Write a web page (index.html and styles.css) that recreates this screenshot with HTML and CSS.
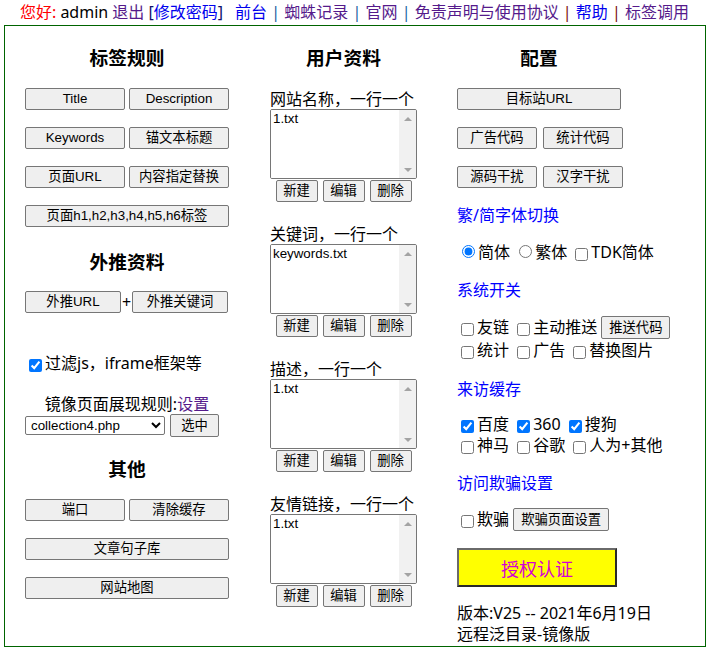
FILE: index.html
```html
<!DOCTYPE html>
<html lang="zh-CN">
<head>
<meta charset="utf-8">
<title>后台管理</title>
<link rel="stylesheet" href="styles.css">
</head>
<body>
<div class="topbar">
  <span class="hello">您好:</span> admin <a class="v" href="#">退出</a> <span class="br">[</span><a href="#">修改密码</a><span class="br">]</span><span class="spacer"></span><a href="#">前台</a> <span class="sep1">|</span> <a class="v" href="#">蜘蛛记录</a> <span class="sep1">|</span> <a class="v" href="#">官网</a> <span class="sep1">|</span> <a class="v" href="#">免责声明与使用协议</a> <span class="sep2">|</span> <a href="#">帮助</a> <span class="sep2">|</span> <a class="v" href="#">标签调用</a>
</div>

<div class="panel">
  <div class="col col-left">
    <h3 class="head">标签规则</h3>
    <div class="brow"><button class="btn w100">Title</button><button class="btn w100">Description</button></div>
    <div class="brow"><button class="btn w100">Keywords</button><button class="btn w100">锚文本标题</button></div>
    <div class="brow"><button class="btn w100">页面URL</button><button class="btn w100">内容指定替换</button></div>
    <div class="brow"><button class="btn wfull">页面h1,h2,h3,h4,h5,h6标签</button></div>

    <h3 class="head mt21">外推资料</h3>
    <div class="push-row"><button class="btn w96">外推URL</button><span class="plus">+</span><button class="btn w96">外推关键词</button></div>

    <div class="line filter"><input type="checkbox" checked>过滤js，iframe框架等</div>

    <div class="mirror">镜像页面展现规则:<a class="v" href="#">设置</a></div>
    <div class="select-row">
      <select class="sel"><option>collection4.php</option></select>
      <button class="btn w49 h23">选中</button>
    </div>

    <h3 class="head mt19">其他</h3>
    <div class="brow"><button class="btn w100">端口</button><button class="btn w100">清除缓存</button></div>
    <div class="brow"><button class="btn wfull">文章句子库</button></div>
    <div class="brow"><button class="btn wfull">网站地图</button></div>
  </div>

  <div class="col col-mid">
    <h3 class="head">用户资料</h3>
    <div class="group">
      <div class="lbl">网站名称，一行一个</div>
      <div class="tawrap"><textarea class="ta">1.txt</textarea><div class="sbar"><span class="arr up"></span><span class="arr down"></span></div></div>
      <div class="tbtns"><button class="btn w42">新建</button><button class="btn w42">编辑</button><button class="btn w42">删除</button></div>
    </div>
    <div class="group">
      <div class="lbl">关键词，一行一个</div>
      <div class="tawrap"><textarea class="ta">keywords.txt</textarea><div class="sbar"><span class="arr up"></span><span class="arr down"></span></div></div>
      <div class="tbtns"><button class="btn w42">新建</button><button class="btn w42">编辑</button><button class="btn w42">删除</button></div>
    </div>
    <div class="group">
      <div class="lbl">描述，一行一个</div>
      <div class="tawrap"><textarea class="ta">1.txt</textarea><div class="sbar"><span class="arr up"></span><span class="arr down"></span></div></div>
      <div class="tbtns"><button class="btn w42">新建</button><button class="btn w42">编辑</button><button class="btn w42">删除</button></div>
    </div>
    <div class="group">
      <div class="lbl">友情链接，一行一个</div>
      <div class="tawrap"><textarea class="ta">1.txt</textarea><div class="sbar"><span class="arr up"></span><span class="arr down"></span></div></div>
      <div class="tbtns"><button class="btn w42">新建</button><button class="btn w42">编辑</button><button class="btn w42">删除</button></div>
    </div>
  </div>

  <div class="col col-right">
    <h3 class="head">配置</h3>
    <div class="brow"><button class="btn w164">目标站URL</button></div>
    <div class="brow g5"><button class="btn w80">广告代码</button><button class="btn w80">统计代码</button></div>
    <div class="brow g5"><button class="btn w80">源码干扰</button><button class="btn w80">汉字干扰</button></div>

    <div class="blue mt16">繁/简字体切换</div>
    <div class="line h22 mt15"><input type="radio" name="font" checked>简体 <input type="radio" name="font">繁体 <input type="checkbox">TDK简体</div>

    <div class="blue mt16">系统开关</div>
    <div class="line h23 mt15"><input type="checkbox">友链 <input type="checkbox">主动推送 <button class="btn ibtn w69">推送代码</button></div>
    <div class="line h22"><input type="checkbox">统计 <input type="checkbox">广告 <input type="checkbox">替换图片</div>

    <div class="blue mt17">来访缓存</div>
    <div class="line h21 mt14"><input type="checkbox" checked>百度 <input type="checkbox" checked>360 <input type="checkbox" checked>搜狗</div>
    <div class="line h21"><input type="checkbox">神马 <input type="checkbox">谷歌 <input type="checkbox">人为+其他</div>

    <div class="blue mt16">访问欺骗设置</div>
    <div class="line h23 mt14"><input type="checkbox">欺骗 <button class="btn ibtn w96">欺骗页面设置</button></div>

    <button class="auth">授权认证</button>

    <div class="ver">版本:V25 -- 2021年6月19日<br>远程泛目录-镜像版</div>
  </div>
</div>
</body>
</html>
```

FILE: styles.css
```css
* {
  box-sizing: border-box;
}

html,
body {
  margin: 0;
  padding: 0;
  background: #fff;
}

body {
  width: 709px;
  font-family: "Noto Sans", "Noto Sans CJK SC", sans-serif;
  font-size: 16px;
  color: #000;
}

a {
  color: #0000ee;
  text-decoration: none;
}

a.v {
  color: #551a8b;
}

/* top bar */
.topbar {
  height: 25px;
  line-height: 24px;
  text-align: center;
  white-space: nowrap;
}

.hello {
  color: #f00;
}

.br {
  color: #10106a;
}

.spacer {
  display: inline-block;
  width: 12px;
}

.sep1 {
  color: #1a5fa0;
}

.sep2 {
  color: #7a0c0c;
}

/* panel */
.panel {
  display: flex;
  height: 622px;
  margin: 0 3px 0 4px;
  border: 1px solid #006400;
}

.col {
  display: flex;
  flex-direction: column;
  align-items: flex-start;
  padding-left: 20px;
}

.col-left {
  width: 245px;
}

.col-mid {
  width: 187px;
}

.col-right {
  width: 268px;
}

.head {
  margin: 18px 0 0;
  height: 27px;
  line-height: 27px;
  font-size: 18.72px;
  font-weight: bold;
  text-align: center;
  white-space: nowrap;
}

.col-left .head {
  width: 204px;
}

.col-mid .head {
  width: 147px;
}

.col-right .head {
  width: 164px;
}

/* buttons */
.btn {
  height: 22px;
  padding: 0 4px;
  font-family: "Liberation Sans", "Noto Sans CJK SC", sans-serif;
  font-size: 13.33px;
  line-height: 20px;
  color: #000;
  background: #efefef;
  border: 1px solid #767676;
  border-radius: 2px;
  white-space: nowrap;
}

.w42 { width: 42px; }
.w49 { width: 49px; }
.w69 { width: 69px; }
.w80 { width: 80px; }
.w96 { width: 96px; }
.w100 { width: 100px; }
.w164 { width: 164px; }
.wfull { width: 204px; }

.brow {
  display: flex;
  gap: 4px;
  margin-top: 17px;
}

.brow.g5 {
  gap: 6px;
}

.mt14 { margin-top: 14px; }
.mt15 { margin-top: 15px; }
.mt16 { margin-top: 16px; }
.mt17 { margin-top: 17px; }
.mt19 { margin-top: 19px; }
.mt21 { margin-top: 21px; }

.push-row {
  display: flex;
  align-items: center;
  margin-top: 16px;
}

.plus {
  width: 11px;
  text-align: center;
  line-height: 22px;
}

/* inline lines with checkboxes */
.line {
  white-space: nowrap;
  line-height: 22px;
}

.line input[type="checkbox"] {
  margin: 3px 3px 3px 4px;
  vertical-align: -3px;
}

.line input[type="radio"] {
  margin: 3px 3px 0 5px;
  vertical-align: 0;
}

.h21 { height: 21px; line-height: 21px; }
.h22 { height: 22px; line-height: 22px; }
.h23 { height: 23px; line-height: 23px; }

.btn.h23 {
  line-height: 21px;
}

.ibtn {
  height: 23px;
  line-height: 21px;
  vertical-align: middle;
  margin-top: -2px;
}

.filter {
  margin-top: 39px;
  height: 22px;
}

.mirror {
  width: 204px;
  height: 20px;
  margin-top: 20px;
  line-height: 20px;
  text-align: center;
  white-space: nowrap;
}

.select-row {
  display: flex;
  align-items: center;
  gap: 5px;
  height: 22px;
}

.sel {
  width: 140px;
  height: 19px;
  padding: 0 0 0 1px;
  font-family: "Liberation Sans", sans-serif;
  font-size: 13.33px;
  color: #000;
  background: #fff;
  border: 1px solid #767676;
  border-radius: 2px;
}

/* middle column */
.group {
  display: flex;
  flex-direction: column;
  align-items: flex-start;
  margin-top: 18px;
}

.group + .group {
  margin-top: 22px;
}

.lbl {
  height: 20px;
  line-height: 20px;
  white-space: nowrap;
}

.tawrap {
  display: flex;
  width: 147px;
  height: 70px;
  border: 1px solid #767676;
  border-radius: 2px;
  overflow: hidden;
  background: #fff;
}

.ta {
  flex: 1;
  min-width: 0;
  height: 100%;
  margin: 0;
  padding: 1px 2px;
  font-family: "Liberation Sans", sans-serif;
  font-size: 13.33px;
  line-height: 15px;
  color: #000;
  border: 0;
  outline: none;
  resize: none;
  overflow: hidden;
  background: #fff;
}

.sbar {
  display: flex;
  flex-direction: column;
  justify-content: space-between;
  width: 17px;
  background: #f1f1f1;
}

.arr {
  display: flex;
  align-items: center;
  justify-content: center;
  width: 17px;
  height: 17px;
}

.arr::before {
  content: "";
  width: 0;
  height: 0;
  border-left: 4px solid transparent;
  border-right: 4px solid transparent;
}

.arr.up::before {
  border-bottom: 4px solid #a3a3a3;
}

.arr.down::before {
  border-top: 4px solid #a3a3a3;
}

.tbtns {
  display: flex;
  justify-content: center;
  gap: 5px;
  width: 147px;
  margin-top: 1px;
}

/* right column */
.blue {
  height: 22px;
  line-height: 22px;
  color: #0000ff;
  white-space: nowrap;
}

.auth {
  width: 160px;
  height: 39px;
  margin-top: 17px;
  padding: 0;
  font-family: "Noto Sans", "Noto Sans CJK SC", sans-serif;
  font-size: 18px;
  color: #d400d4;
  background: #ffff00;
  border: 2px solid;
  border-color: #6a6a6a #2a2a2a #2a2a2a #6a6a6a;
}

.ver {
  margin-top: 16px;
  line-height: 21px;
  white-space: nowrap;
}
```
